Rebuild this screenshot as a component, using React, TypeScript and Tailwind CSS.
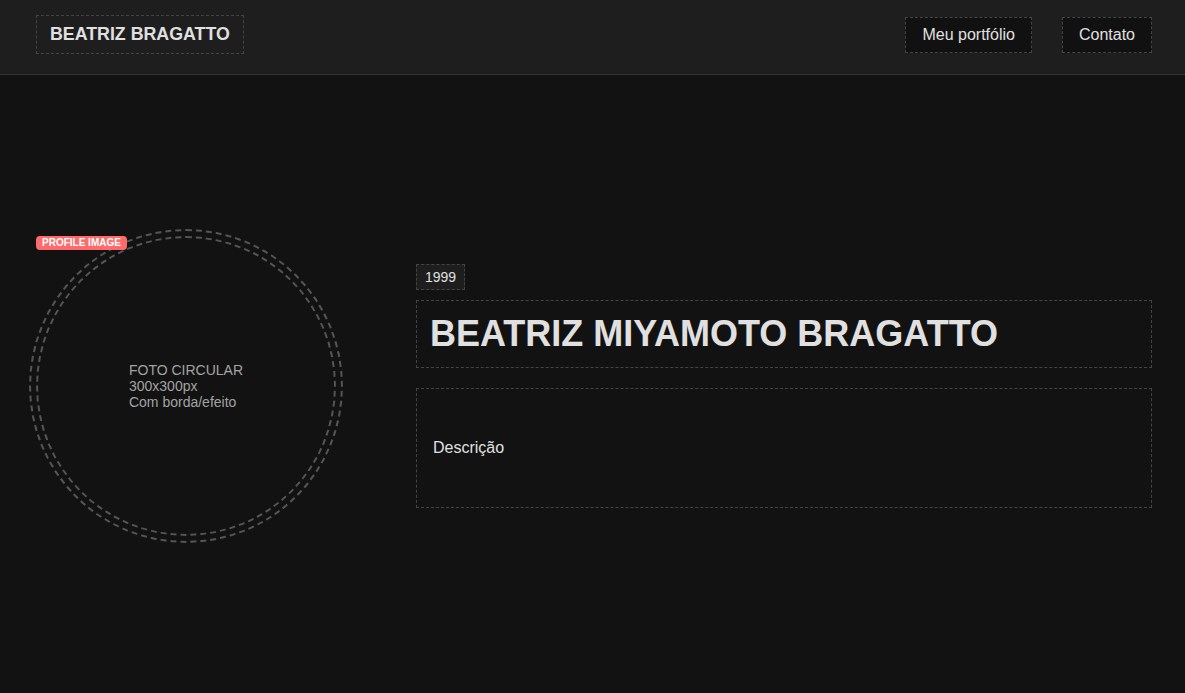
export default function App() {
  return (
    <div className="min-h-screen flex flex-col bg-[#121212] text-[#e0e0e0] font-['Liberation_Sans',Arial,sans-serif]">
      <header className="h-[75px] flex items-center justify-between pl-9 pr-[33px] pb-1 bg-[#1e1e1e] border-b border-[#333]">
        <div className="-mt-px px-[13px] py-2 border border-dashed border-[#444] text-[17.8px] leading-[21px] font-bold">
          BEATRIZ BRAGATTO
        </div>
        <nav className="flex items-center gap-[30px]">
          <a className="px-4 py-2 text-base leading-[18px] bg-[#111] border border-dashed border-[#444]">Meu portfólio</a>
          <a className="px-4 py-2 text-base leading-[18px] bg-[#111] border border-dashed border-[#444]">Contato</a>
        </nav>
      </header>

      <main className="flex-1 flex items-center gap-20 pl-9 pr-[33px] pt-[3px]">
        <div className="relative w-[300px] h-[300px] shrink-0">
          <div className="w-full h-full rounded-full border-2 border-dashed border-[#555] outline-2 outline-dashed outline-[#555] outline-offset-[5px] flex items-center justify-center">
            <div className="text-sm leading-4 text-[#a3a3a3]">
              FOTO CIRCULAR<br />300x300px<br />Com borda/efeito
            </div>
          </div>
          <span className="absolute left-0 top-0 px-1.5 h-[14px] flex items-center rounded-sm bg-[#ff6b6b] text-white text-[10px] font-bold leading-none">
            PROFILE IMAGE
          </span>
        </div>

        <div className="flex-1 flex flex-col items-start">
          <span className="px-2 py-1 text-sm leading-4 bg-[#1e1e1e] border border-dashed border-[#444]">1999</span>
          <h1 className="mt-[10px] w-full px-[13px] py-4 text-[36px] leading-[34px] font-bold border border-dashed border-[#444]">
            BEATRIZ MIYAMOTO BRAGATTO
          </h1>
          <div className="mt-5 w-full h-[120px] px-4 flex items-center text-base border border-dashed border-[#444]">
            Descrição
          </div>
        </div>
      </main>
    </div>
  )
}
